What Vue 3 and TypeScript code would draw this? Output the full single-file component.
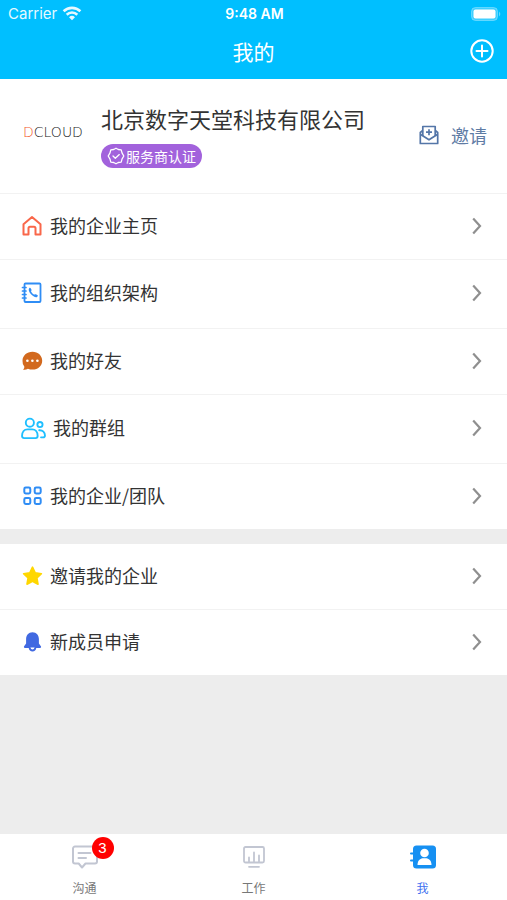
<script setup lang="ts">
interface MenuItem {
  label: string
  icon: string
  color: string
  tall?: boolean
  wide?: boolean
}

const groups: MenuItem[][] = [
  [
    { label: '我的企业主页', icon: 'home', color: '#f9674a' },
    { label: '我的组织架构', icon: 'contacts', color: '#2f8df5', tall: true },
    { label: '我的好友', icon: 'chat', color: '#d2691e' },
    { label: '我的群组', icon: 'people', color: '#1fbfff', tall: true, wide: true },
    { label: '我的企业/团队', icon: 'grid', color: '#2f8df5' },
  ],
  [
    { label: '邀请我的企业', icon: 'star', color: '#ffd700' },
    { label: '新成员申请', icon: 'bell', color: '#4169e1' },
  ],
]
</script>

<template>
  <div class="page">
    <header class="top">
      <div class="status">
        <div class="carrier">
          <span>Carrier</span>
          <svg width="20" height="15" viewBox="0 0 20 15" fill="none" stroke="#fff" stroke-width="2.6">
            <path d="M1.6 5.3a12 12 0 0 1 16.8 0" />
            <path d="M4.7 8.7a7.6 7.6 0 0 1 10.6 0" />
            <path d="M10 14.2 7 11.2a4.3 4.3 0 0 1 6 0z" fill="#fff" stroke="none" />
          </svg>
        </div>
        <span class="clock">9:48 AM</span>
        <div class="battery">
          <svg width="30" height="14" viewBox="0 0 30 14">
            <rect x="0.5" y="0.5" width="26" height="13" rx="4" fill="#fff" fill-opacity=".25" stroke="#fff" stroke-opacity=".3" />
            <rect x="2.5" y="2.5" width="22" height="9" rx="2" fill="#fff" />
            <path d="M28 4.5q2.6 2.5 0 5z" fill="#fff" fill-opacity=".4" />
          </svg>
        </div>
      </div>
      <div class="nav">
        <h1>我的</h1>
        <button class="add" type="button" aria-label="添加">
          <svg width="24" height="24" viewBox="0 0 24 24" fill="none" stroke="#fff" stroke-width="2" stroke-linecap="round">
            <circle cx="12" cy="12" r="10.7" />
            <path d="M12 6.5v11M6.5 12h11" />
          </svg>
        </button>
      </div>
    </header>

    <section class="profile">
      <div class="logo"><span class="logo-mark">D</span>CLOUD</div>
      <div class="company">
        <h2>北京数字天堂科技有限公司</h2>
        <span class="badge">
          <svg width="18" height="18" viewBox="0 0 18 18" fill="none" stroke="#fff" stroke-width="1.3" stroke-linejoin="round" stroke-linecap="round">
            <path d="M9 1.2 11.3 2.5 14.2 2.9 15 5.9 16.8 9 15 12.1 14.2 15.1 11.3 15.5 9 16.8 6.7 15.5 3.8 15.1 3 12.1 1.2 9 3 5.9 3.8 2.900 6.700 2.500z" />
            <path d="m6 9 2.300 2.300L12.300 7.600" />
          </svg>
          服务商认证
        </span>
      </div>
      <button class="invite" type="button">
        <svg width="20" height="20" viewBox="0 0 20 20" fill="none" stroke="#5476a8" stroke-width="1.7" stroke-linejoin="round">
          <path d="M3.8 11V1.500h12.400V11" />
          <path d="M3.8 5.500 1.300 7.500v11h17.400v-11l-2.500-2" />
          <path d="m1.300 9.200 8.700 5.600 8.700-5.600" />
          <path d="M10 4.200v6M7 7.200h6" />
        </svg>
        <span>邀请</span>
      </button>
    </section>

    <main>
      <ul v-for="(group, g) in groups" :key="g" class="group">
        <li v-for="item in group" :key="item.label">
          <a href="#" class="row" :class="{ tall: item.tall }">
            <svg class="icon" :class="[item.icon, { wide: item.wide }]" :style="{ color: item.color }" :viewBox="item.wide ? '0 0 24 22' : '0 0 22 22'" fill="none" stroke="currentColor" stroke-width="2" stroke-linejoin="round" stroke-linecap="round">
              <template v-if="item.icon === 'home'">
                <path d="M2.500 9.300 11 2l8.500 7.300v10.200h-5v-6.300a1.500 1.500 0 0 0-1.500-1.500H9a1.500 1.500 0 0 0-1.500 1.500v6.300h-5z" />
              </template>
              <template v-else-if="item.icon === 'contacts'">
                <rect x="3.500" y="1.500" width="16" height="18.500" rx="1" stroke-width="1.800" />
                <path d="M1.500 5.500h3.500M1.500 9h3.500M1.500 12.500h3.500M1.500 16h3.500" stroke-width="1.700" />
                <path d="M8.200 6.200c-1 1-.5 3.300 1.600 5.700s4.900 3.800 6.300 3c.9-.6.900-1.400.2-1.800l-1.500-.8c-.7-.3-1.200.5-1.900.2-1-.5-2.400-2-2.800-3-.2-.7.700-.9.400-1.700l-.7-1.400c-.3-.7-1-.8-1.600-.2z" fill="currentColor" stroke="none" />
              </template>
              <template v-else-if="item.icon === 'chat'">
                <path d="M11.500 1.800c5.600 0 9.700 3.900 9.700 8.900s-4.100 8.900-9.700 8.900c-1.700 0-3.200-.3-4.600-.9-1.300.8-2.800 1.200-4.900 1.100 1-1 1.500-2.200 1.300-3.300A8.300 8.300 0 0 1 1.500 10.700c0-5 4.300-8.900 10-8.900z" fill="currentColor" stroke="none" />
                <g fill="#fff" stroke="none">
                  <circle cx="6.400" cy="10.700" r="1.300" />
                  <circle cx="11.400" cy="10.700" r="1.300" />
                  <circle cx="16.400" cy="10.700" r="1.300" />
                </g>
              </template>
              <template v-else-if="item.icon === 'people'">
                <g stroke-width="1.800">
                  <circle cx="8.500" cy="5.400" r="3.900" />
                  <path d="M1 18.200c0-4 2.200-6.400 5.200-6.400h4.600c3 0 5.200 2.400 5.200 6.400 0 1.300-.8 2-2 2H3c-1.200 0-2-.7-2-2z" />
                  <circle cx="18.200" cy="7.200" r="2.500" />
                  <path d="M17.500 12.700c3.400-.2 5.500 1.900 5.500 5 0 1.200-.6 1.800-1.800 1.800h-2" />
                </g>
              </template>
              <template v-else-if="item.icon === 'grid'">
                <rect x="3.300" y="2.500" width="6" height="6" rx="1.400" />
                <rect x="13.700" y="2.500" width="6" height="6" rx="1.400" />
                <rect x="3.300" y="13" width="6" height="6" rx="1.400" />
                <rect x="13.700" y="13" width="6" height="6" rx="1.400" />
              </template>
              <template v-else-if="item.icon === 'star'">
                <path d="m11.500 2.200 2.700 5.700 6.200.8-4.500 4.300 1.100 6.200-5.500-3-5.500 3 1.100-6.200L2.600 8.700l6.200-.8z" fill="currentColor" stroke-width="1.600" />
              </template>
              <template v-else>
                <path d="M11.500 1.200c4 0 6.400 3 6.400 6.800v4.600l2 2.700c.5.800.1 1.600-.8 1.600H3.900c-.9 0-1.300-.8-.8-1.600l2-2.700V8c0-3.800 2.400-6.800 6.400-6.800z" fill="currentColor" stroke="none" />
                <path d="M8.500 16.500c.4 2 1.500 3 3 3s2.600-1 3-3" stroke-width="1.800" fill="#fff" />
              </template>
            </svg>
            <span class="label">{{ item.label }}</span>
            <svg class="chevron" width="10" height="18" viewBox="0 0 10 18" fill="none" stroke="#8f8f8f" stroke-width="2.200">
              <path d="m1.200 1.500 6.800 7.500-6.800 7.500" />
            </svg>
          </a>
        </li>
      </ul>
    </main>

    <nav class="tabs">
      <a href="#" class="tab">
        <span class="tab-icon">
          <svg width="28" height="26" viewBox="0 0 28 26" fill="none" stroke="#c2c6d2" stroke-width="2" stroke-linejoin="round" stroke-linecap="round">
            <path d="M4 2.500h20a2 2 0 0 1 2 2v13a2 2 0 0 1-2 2h-9.500L11 23.500l-3.300-4H4a2 2 0 0 1-2-2v-13a2 2 0 0 1 2-2z" />
            <path d="M7.500 9h12M7.500 14h7.500" />
          </svg>
          <span class="count">3</span>
        </span>
        <span>沟通</span>
      </a>
      <a href="#" class="tab">
        <span class="tab-icon">
          <svg width="28" height="26" viewBox="0 0 28 26" fill="none" stroke="#c2c6d2" stroke-width="1.800" stroke-linejoin="round" stroke-linecap="round">
            <rect x="4" y="3" width="20" height="15.500" rx="1.500" />
            <path d="M9 17.500v-4M14 17.500V8.500M19 17.500v-6M9 22.800h10" />
          </svg>
        </span>
        <span>工作</span>
      </a>
      <a href="#" class="tab active">
        <span class="tab-icon">
          <svg width="28" height="26" viewBox="0 0 28 26">
            <rect x="4" y="1.500" width="23" height="23" rx="3.500" fill="#1690f2" />
            <path d="M2 9.500h3M2 16.500h3" stroke="#1690f2" stroke-width="2" stroke-linecap="round" />
            <circle cx="15.500" cy="9" r="4.300" fill="#fff" />
            <path d="M8.500 21c0-4.400 2.400-6.300 5-6.800h4c2.600.5 5 2.400 5 6.800z" fill="#fff" />
          </svg>
        </span>
        <span>我</span>
      </a>
    </nav>
  </div>
</template>

<style>
body {
  margin: 0;
  background: #ededed;
}
</style>

<style scoped>
.page {
  display: flex;
  flex-direction: column;
  min-height: 100vh;
  background: #ededed;
  color: #333;
  font-family: "Noto Sans CJK SC", sans-serif;
}
h1, h2, ul {
  margin: 0;
  padding: 0;
  font-weight: 400;
  list-style: none;
}
a {
  color: inherit;
  text-decoration: none;
}
button {
  padding: 0;
  border: 0;
  background: none;
  font: inherit;
  cursor: pointer;
}
svg {
  display: block;
  flex: none;
}
.top {
  background: #00bfff;
  color: #fff;
}
.status {
  display: grid;
  grid-template-columns: 1fr auto 1fr;
  align-items: center;
  height: 27px;
  padding: 0 6px 0 8px;
  font: 15px/27px Inter, sans-serif;
}
.carrier {
  display: flex;
  align-items: center;
  gap: 5px;
  opacity: 0.9;
}
.clock {
  font-size: 14px;
  font-weight: 600;
}
.battery {
  justify-self: end;
}
.nav {
  display: grid;
  grid-template-columns: 1fr auto 1fr;
  align-items: center;
  height: 48px;
  padding: 0 13px 4px;
}
.nav h1 {
  grid-column: 2;
  font-size: 21px;
  line-height: 30px;
}
.add {
  justify-self: end;
}
.profile {
  display: flex;
  align-items: center;
  padding: 23px 20px 25px 23px;
  border-bottom: 1px solid #f2f2f2;
  background: #fff;
}
.logo {
  width: 78px;
  padding-bottom: 6px;
  color: #222;
  font: 200 14px/20px "DejaVu Sans", sans-serif;
}
.logo-mark {
  color: #f2592a;
}
.company {
  flex: 1;
}
.company h2 {
  font-size: 22px;
  line-height: 32px;
  white-space: nowrap;
}
.badge {
  display: inline-flex;
  align-items: center;
  gap: 1px;
  height: 24px;
  margin-top: 10px;
  padding: 0 6px;
  border-radius: 12px;
  background: #a262dc;
  color: #fff;
  font-size: 14px;
  vertical-align: top;
}
.invite {
  display: flex;
  align-items: center;
  gap: 12px;
  color: #5f7ca5;
  font-size: 18px;
  line-height: 28px;
}
.group + .group {
  margin-top: 15px;
}
.group li + li {
  border-top: 1px solid #f2f2f2;
}
.group {
  background: #fff;
}
.row {
  display: flex;
  box-sizing: border-box;
  align-items: center;
  gap: 7px;
  height: 65px;
  padding: 0 25px 2px 21px;
}
.row.tall {
  height: 68px;
}
.icon {
  width: 22px;
  height: 22px;
}
.icon.wide {
  width: 25px;
  height: 23px;
}
.label {
  flex: 1;
  padding-bottom: 2px;
  font-size: 18px;
  line-height: 28px;
}
.tabs {
  display: grid;
  grid-template-columns: repeat(3, 1fr);
  margin-top: auto;
  background: #fff;
}
.tab {
  display: flex;
  flex-direction: column;
  align-items: center;
  gap: 9px;
  padding: 10px 0 3px;
  color: #777;
  font-size: 12px;
  line-height: 18px;
}
.tab.active {
  color: #4070f0;
}
.tab-icon {
  position: relative;
}
.count {
  position: absolute;
  top: -7px;
  left: 21px;
  width: 22px;
  border-radius: 11px;
  background: #f00;
  color: #fff;
  font: 15px/22px "Liberation Sans", sans-serif;
  text-align: center;
}
</style>
